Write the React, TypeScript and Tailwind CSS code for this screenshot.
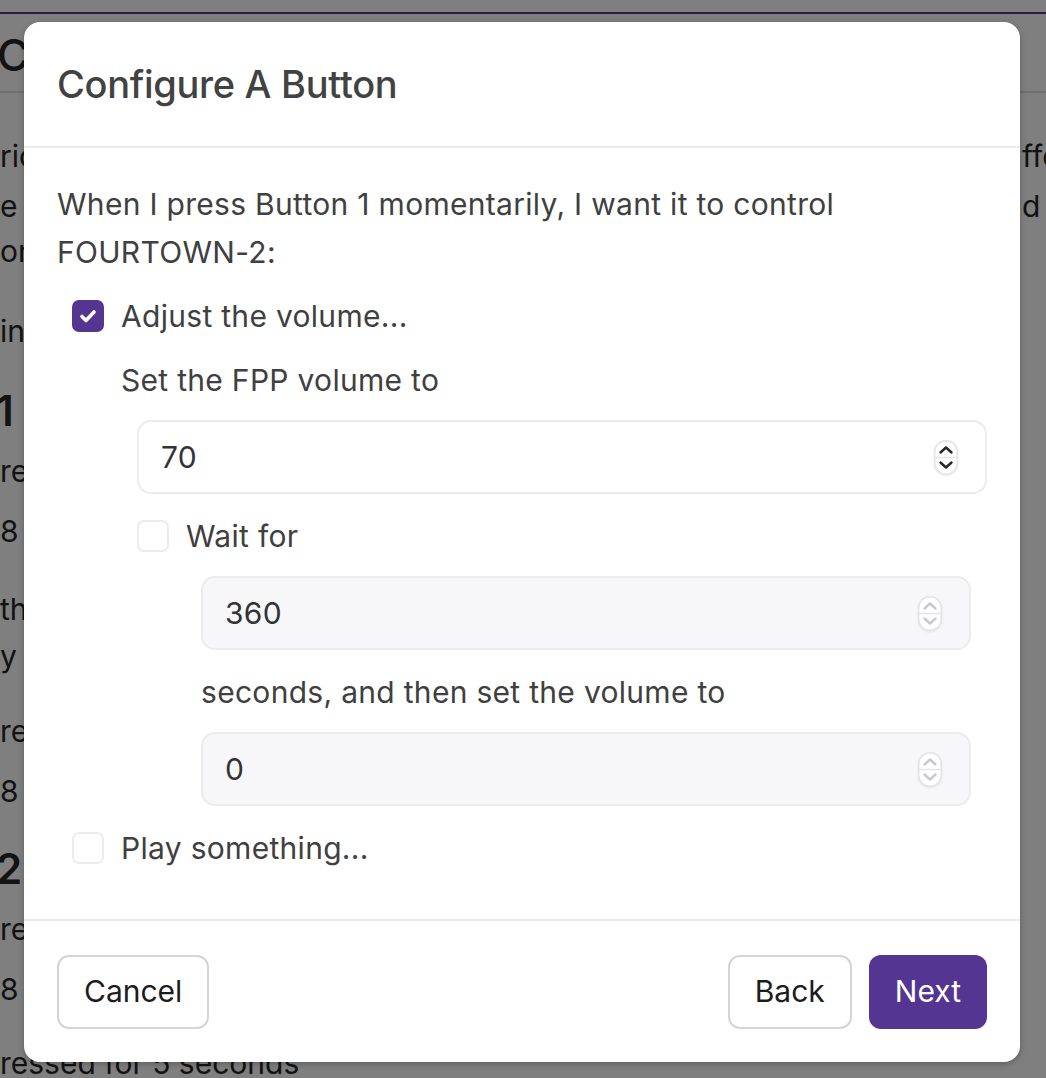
import React from 'react';

const Spinner = ({ disabled }: { disabled?: boolean }) => {
  const c = disabled ? '#c9c9cc' : '#262626';
  return (
    <svg width="24" height="35" viewBox="0 0 24 35" className="shrink-0 drop-shadow-[0_1px_1px_rgba(0,0,0,0.08)]">
      <rect x="0.75" y="0.75" width="22.5" height="33.5" rx="11" fill="white" stroke="#e4e4e7" strokeWidth="1.5" />
      <line x1="1" y1="17.5" x2="23" y2="17.5" stroke="#e4e4e7" strokeWidth="1.5" />
      <path d="M6.5 12.5 L12 7.5 L17.5 12.5" fill="none" stroke={c} strokeWidth="2.4" strokeLinecap="round" strokeLinejoin="round" />
      <path d="M6.5 22.5 L12 27.5 L17.5 22.5" fill="none" stroke={c} strokeWidth="2.4" strokeLinecap="round" strokeLinejoin="round" />
    </svg>
  );
};

const NumberField = ({ value, disabled, className }: { value: string; disabled?: boolean; className?: string }) => (
  <div
    className={`flex items-center h-[74px] rounded-[14px] border-2 border-[#ececec] pl-[22px] pr-[27px] ${
      disabled ? 'bg-[#f7f7fa]' : 'bg-white'
    } ${className ?? ''}`}
  >
    <span className="flex-1 text-[30px] text-[#333]">{value}</span>
    <Spinner disabled={disabled} />
  </div>
);

const Checkbox = ({ checked }: { checked?: boolean }) =>
  checked ? (
    <div className="w-[32px] h-[32px] shrink-0 rounded-[7px] bg-[#553592] flex items-center justify-center">
      <svg width="32" height="32" viewBox="0 0 32 32">
        <path d="M10 16.5 L14 20.5 L22 12" fill="none" stroke="white" strokeWidth="3.6" strokeLinecap="round" strokeLinejoin="round" />
      </svg>
    </div>
  ) : (
    <div className="w-[32px] h-[32px] shrink-0 rounded-[7px] border-2 border-[#ececec] bg-white" />
  );

// the page that sits behind the dialog, only the edges show
const BackPage = () => (
  <div className="min-h-[1078px] bg-white text-[#262626] text-[30px] leading-none whitespace-nowrap">
    <div className="h-[12px]" />
    <div className="h-[2px] bg-[#5c3596]" />
    <div className="h-[79px] border-b-2 border-[#dedede] flex items-center pt-[4px] -ml-[3px] text-[44px] font-medium">Configure Buttons</div>
    <div className="mt-[53px] flex justify-between h-[20px] items-center">
      <span>rical signal buttons</span>
      <span className="w-[24px] overflow-hidden">ffect</span>
    </div>
    <div className="mt-[30px] flex justify-between h-[20px] items-center">
      <span>e front panel</span>
      <span className="w-[24px] overflow-hidden">d and</span>
    </div>
    <div className="mt-[25px] h-[20px] flex items-center">on each</div>
    <div className="mt-[60px] h-[20px] flex items-center">ing</div>
    <div className="mt-[60px] h-[20px] flex items-center text-[42px] font-semibold -ml-[4px]">1</div>
    <div className="mt-[40px] h-[20px] flex items-center">ressed momentarily</div>
    <div className="mt-[40px] h-[20px] flex items-center">8</div>
    <div className="mt-[58px] h-[20px] flex items-center">then</div>
    <div className="mt-[27px] h-[20px] flex items-center">y CH</div>
    <div className="mt-[55px] h-[20px] flex items-center">ressed</div>
    <div className="mt-[40px] h-[20px] flex items-center">8</div>
    <div className="mt-[58px] h-[20px] flex items-center text-[42px] font-semibold -ml-[4px]">2</div>
    <div className="mt-[40px] h-[20px] flex items-center">ressed</div>
    <div className="mt-[40px] h-[20px] flex items-center">8</div>
    <div className="mt-[54px] h-[20px] flex items-center">ressed for 5 seconds</div>
  </div>
);

export default function App() {
  return (
    <div className="relative w-[1046px] h-[1078px] overflow-hidden font-[Inter,'Noto_Sans',sans-serif]">
      <BackPage />
      <div className="absolute inset-0 bg-black/50">
        <div className="ml-[24px] mt-[22px] w-[996px] bg-white rounded-[16px] shadow-[0_2px_6px_rgba(0,0,0,0.25)] text-[#404040]">
          <div className="h-[126px] border-b-2 border-[#ececec] flex items-center px-[33px]">
            <h2 className="text-[38px] font-medium tracking-[-0.3px] text-[#424242]">Configure A Button</h2>
          </div>

          <div className="px-[33px] pt-[32px] pb-[47px] text-[30px] tracking-[0.3px] leading-[48px]">
            <p className="w-[840px]">When I press Button 1 momentarily, I want it to control FOURTOWN-2:</p>

            <div className="mt-[16px] ml-[15px]">
              <div className="flex items-center gap-[17px]">
                <Checkbox checked />
                <span>Adjust the volume...</span>
              </div>
              <div className="ml-[49px] mt-[16px]">
                <div>Set the FPP volume to</div>
                <NumberField value="70" className="mt-[16px] ml-[16px]" />

                <div className="mt-[18px] ml-[16px] flex items-center gap-[17px]">
                  <Checkbox />
                  <span>Wait for</span>
                </div>
                <div className="ml-[80px] mr-[16px]">
                  <NumberField value="360" disabled className="mt-[16px]" />
                  <div className="mt-[18px]">seconds, and then set the volume to</div>
                  <NumberField value="0" disabled className="mt-[16px]" />
                </div>
              </div>

              <div className="mt-[18px] flex items-center gap-[17px]">
                <Checkbox />
                <span>Play something...</span>
              </div>
            </div>
          </div>

          <div className="border-t-2 border-[#ececec] h-[143px] px-[33px] flex items-center justify-between">
            <button className="h-[74px] px-[25px] rounded-[12px] border-2 border-[#d4d4d4] bg-white text-[30px] text-[#1c1c1e]">
              Cancel
            </button>
            <div className="flex gap-[17px]">
              <button className="h-[74px] px-[25px] rounded-[12px] border-2 border-[#d4d4d4] bg-white text-[30px] text-[#1c1c1e]">
                Back
              </button>
              <button className="h-[74px] px-[26px] rounded-[12px] bg-[#553592] text-[30px] text-white">Next</button>
            </div>
          </div>
        </div>
      </div>
    </div>
  );
}
